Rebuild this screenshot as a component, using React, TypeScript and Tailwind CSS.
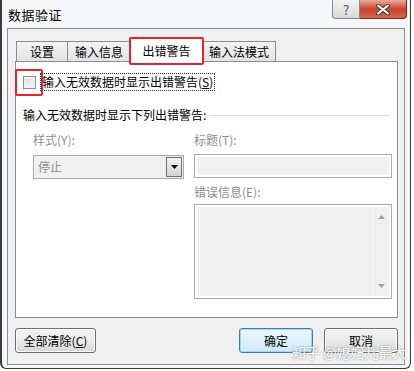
import React from 'react';

const font = { fontFamily: '"Noto Sans CJK SC", "Microsoft YaHei", sans-serif' };

function Tab({ label, active, boxed, w }: { label: string; active?: boolean; boxed?: boolean; w: string }) {
  if (active) {
    return (
      <div className={`${w} relative -ml-[1px] h-[24px] -mb-[1px] flex items-center justify-center bg-white border border-[#898c95] border-b-0 z-10`}>
        <span className="text-[12px] text-black">{label}</span>
        {boxed && (
          <div className="absolute -left-[2px] -right-[2px] -top-[2px] -bottom-[3px] border-2 border-[#e3242b] rounded-[2px]" />
        )}
      </div>
    );
  }
  return (
    <div className={`${w} -ml-[1px] first:ml-0 h-[20px] flex items-center justify-center border border-b-0 border-[#898c95] bg-gradient-to-b from-[#f3f3f3] to-[#e3e3e3]`}>
      <span className="text-[12px] text-black">{label}</span>
    </div>
  );
}

function Btn({ label, focused, w }: { label: React.ReactNode; focused?: boolean; w: string }) {
  return (
    <div
      className={`${w} h-[25px] flex items-center justify-center rounded-[3px] border text-[12px] text-black ${
        focused
          ? 'border-[#3c7fb1] shadow-[inset_0_0_0_1px_#a4d6f2] bg-gradient-to-b from-[#eaf6fd] to-[#d2e9f7]'
          : 'border-[#707070] shadow-[inset_0_0_0_1px_#fbfbfb] bg-gradient-to-b from-[#f2f2f2] via-[#ebebeb] to-[#d6d6d6]'
      }`}
    >
      {label}
    </div>
  );
}

export default function App() {
  return (
    <div className="w-[414px] h-[371px] bg-white overflow-hidden relative" style={font}>
      {/* window frame */}
      <div className="w-[411px] h-[369px] flex flex-col bg-[#f6f7f9] border-l-2 border-r border-b border-[#3a3a3a] rounded-b-[6px] relative">
        {/* title bar */}
        <div className="h-[28px] flex items-start">
          <div className="pl-[6px] pt-[6px] text-[13px] leading-[18px] tracking-[0.5px] text-black">数据验证</div>
          <div className="ml-auto mr-[3px] flex">
            <div className="w-[28px] h-[19px] flex items-center justify-center border border-[#8a8a8a] border-t-0 rounded-bl-[4px] bg-gradient-to-b from-[#f4f4f4] to-[#d8d8d8] text-[13px] text-[#555] leading-none">
              ?
            </div>
            <div className="w-[47px] h-[19px] flex items-center justify-center border border-[#6d2b2b] border-t-0 border-l-0 rounded-br-[4px] bg-gradient-to-b from-[#e9a99c] via-[#c7432f] to-[#d8674f]">
              <svg width="14" height="11" viewBox="0 0 14 11">
                <path d="M2 1.5 L12 9.5 M12 1.5 L2 9.5" stroke="#3a3a3a" strokeWidth="4" strokeLinecap="round" />
                <path d="M2 1.5 L12 9.5 M12 1.5 L2 9.5" stroke="#ffffff" strokeWidth="2" strokeLinecap="round" />
              </svg>
            </div>
          </div>
        </div>

        {/* client area */}
        <div className="mx-[5px] h-[337px] bg-[#f0f0f0] border border-[#8e8e8e] flex flex-col">
          <div className="pt-[8px] pl-[7px] pr-[6px]">
            {/* tabs */}
            <div className="flex items-end h-[24px] pl-[1px]">
              <Tab w="w-[52px]" label="设置" />
              <Tab w="w-[64px]" label="输入信息" />
              <Tab w="w-[73px]" label="出错警告" active boxed />
              <Tab w="w-[74px]" label="输入法模式" />
            </div>
            {/* tab page */}
            <div className="h-[257px] bg-white border border-[#898c95] flex flex-col">
              {/* checkbox row */}
              <div className="flex items-center mt-[11px] ml-[7px] relative">
                <div className="w-[13px] h-[13px] border border-[#8f8f8f] bg-gradient-to-br from-[#dcdcdc] to-[#f7f7f7] shadow-[inset_0_0_0_2px_#f0f0f0]" />
                <div className="ml-[4px] px-[1px] h-[18px] flex items-center border border-dotted border-[#333] text-[12px] text-black">
                  输入无效数据时显示出错警告(<span className="underline">S</span>)
                </div>
                <div className="absolute -left-[8px] -top-[4px] w-[28px] h-[27px] border-2 border-[#e3242b] rounded-[2px]" />
              </div>
              {/* group */}
              <div className="flex items-center mt-[15px] ml-[7px] mr-[7px]">
                <span className="text-[12px] text-black">输入无效数据时显示下列出错警告:</span>
                <div className="flex-1 ml-[4px] h-[1px] bg-[#d5dfe5]" />
              </div>
              <div className="flex mt-[7px] ml-[17px]">
                <div className="w-[151px] flex flex-col">
                  <span className="text-[12px] text-[#8d8d8d] leading-[18px]">样式(Y):</span>
                  <div className="mt-[6px] h-[24px] flex items-center border border-[#a9a9a9] bg-[#f0f0f0]">
                    <span className="ml-[4px] text-[12px] text-[#8d8d8d]">停止</span>
                    <div className="ml-auto mr-[1px] w-[16px] h-[20px] flex items-center justify-center border border-[#707070] bg-gradient-to-b from-[#f2f2f2] to-[#d4d4d4]">
                      <svg width="7" height="4" viewBox="0 0 7 4">
                        <path d="M0 0 H7 L3.5 4 Z" fill="#000" />
                      </svg>
                    </div>
                  </div>
                </div>
                <div className="ml-[10px] w-[198px] flex flex-col">
                  <span className="text-[12px] text-[#8d8d8d] leading-[18px]">标题(T):</span>
                  <div className="mt-[5px] h-[24px] border border-[#acacac] bg-[#f0f0f0] shadow-[inset_0_0_0_2px_#ffffff]" />
                  <span className="mt-[5px] text-[12px] text-[#8d8d8d] leading-[18px]">错误信息(E):</span>
                  <div className="mt-[3px] h-[95px] border border-[#acacac] bg-[#f0f0f0] shadow-[inset_0_0_0_2px_#ffffff] flex justify-end p-[2px]">
                    <div className="w-[17px] flex flex-col items-center justify-between py-[8px] bg-[#f0f0f0] border-l border-[#fafafa]">
                      <svg width="7" height="4" viewBox="0 0 7 4">
                        <path d="M0 4 H7 L3.5 0 Z" fill="#a0a0a0" />
                      </svg>
                      <svg width="7" height="4" viewBox="0 0 7 4">
                        <path d="M0 0 H7 L3.5 4 Z" fill="#a0a0a0" />
                      </svg>
                    </div>
                  </div>
                </div>
              </div>
            </div>
          </div>
          {/* buttons */}
          <div className="flex mt-[10px] ml-[7px] mr-[6px]">
            <Btn w="w-[81px]" label={<span>全部清除(<span className="underline">C</span>)</span>} />
            <div className="ml-auto flex gap-[11px]">
              <Btn w="w-[74px]" label="确定" focused />
              <Btn w="w-[74px]" label="取消" />
            </div>
          </div>
        </div>
      </div>
      {/* watermark */}
      <div className="absolute left-[292px] top-[343px] whitespace-nowrap text-[14px] leading-[18px] text-white [text-shadow:0_0_2px_#6b6b6b] opacity-90">
        知乎 @媳妇儿最大
      </div>
    </div>
  );
}
